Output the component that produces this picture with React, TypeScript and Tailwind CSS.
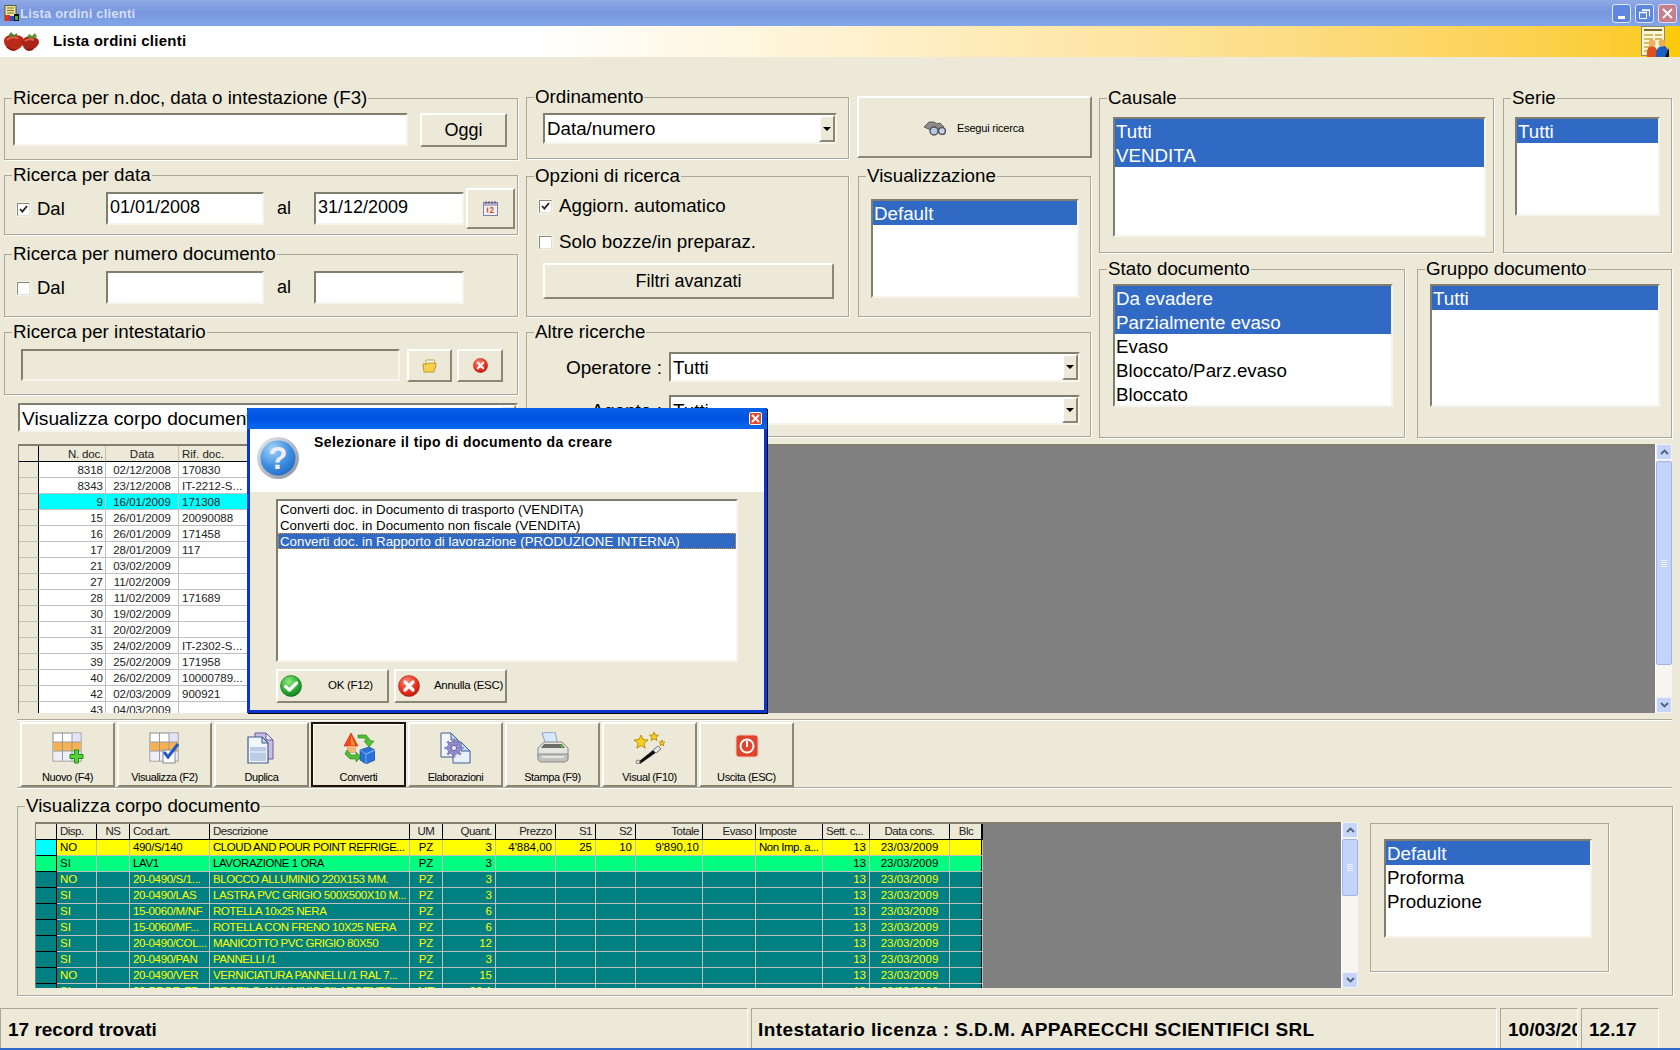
import type { ReactNode } from 'react';

const sunken = 'border-2 border-t-[#817e6e] border-l-[#817e6e] border-r-[#f6f4ec] border-b-[#f6f4ec]';
const raised = 'border-2 border-t-white border-l-white border-r-[#8a8775] border-b-[#8a8775]';

function Group({ label, className, children }: { label?: string; className: string; children?: ReactNode }) {
  return (
    <div className={`border border-[#aca899] shadow-[1px_1px_0_#fff] ${className}`}>
      {label && (
        <div className="-mt-[12px] ml-[7px] w-fit h-[23px] bg-[#ece9d8] px-[1px] leading-[22px] text-[18.75px] whitespace-nowrap">
          {label}
        </div>
      )}
      {children}
    </div>
  );
}

function ListBox({ items, selected, className }: { items: string[]; selected: number; className: string }) {
  return (
    <div className={`bg-white overflow-hidden ${sunken} ${className}`}>
      {items.map((item, i) => (
        <div
          key={item}
          className={`h-[24px] leading-[25px] px-[1px] text-[18.75px] whitespace-nowrap ${i < selected ? 'bg-[#316ac5] text-white' : 'text-black'}`}
        >
          {item}
        </div>
      ))}
    </div>
  );
}

function Arrow({ className }: { className?: string }) {
  return (
    <svg width="8" height="4" viewBox="0 0 8 4" className={className}>
      <path d="M0 0h8L4 4z" fill="#000" />
    </svg>
  );
}

function Combo({ value, className, text = 'text-[18.75px]' }: { value: string; className: string; text?: string }) {
  return (
    <div className={`flex bg-white ${sunken} ${className}`}>
      <div className={`flex-1 pl-[2px] leading-[28px] whitespace-nowrap overflow-hidden ${text}`}>{value}</div>
      <div className={`w-[16px] flex items-center justify-center bg-[#ece9d8] ${raised}`}>
        <Arrow />
      </div>
    </div>
  );
}

function Check({ on }: { on?: boolean }) {
  return (
    <div className="w-[13px] h-[13px] shrink-0 flex items-center justify-center bg-white border border-t-[#8a8775] border-l-[#8a8775] border-r-[#e4e2d6] border-b-[#e4e2d6] shadow-[0_0_0_1px_#f4f2e8]">
      {on && (
        <svg width="9" height="9" viewBox="0 0 9 9">
          <path d="M1 4l2.400 2.600L8 1" fill="none" stroke="#222" strokeWidth="1.800" />
        </svg>
      )}
    </div>
  );
}

function Input({ value, className }: { value?: string; className: string }) {
  return (
    <div className={`bg-white pl-[2px] text-[18px] leading-[26px] whitespace-nowrap overflow-hidden ${sunken} ${className}`}>
      {value}
    </div>
  );
}

function Scrollbar({ thumb }: { thumb: string }) {
  return (
    <div className="w-[17px] shrink-0 flex flex-col bg-[#f6f5f0] border-l border-white">
      <div className="h-[16px] shrink-0 flex items-center justify-center bg-[#c6d5f8] border border-[#eef2fd] rounded-[2px]">
        <svg width="9" height="6" viewBox="0 0 9 6"><path d="M1 5l3.500-3.500L8 5" fill="none" stroke="#4d6185" strokeWidth="1.800" /></svg>
      </div>
      <div className={`mt-[1px] shrink-0 flex flex-col items-center justify-center gap-[1px] bg-[#c3d3fb] border border-[#9fb4ea] rounded-[2px] ${thumb}`}>
        <div className="w-[6px] h-[1px] bg-[#eef2fd]" />
        <div className="w-[6px] h-[1px] bg-[#eef2fd]" />
        <div className="w-[6px] h-[1px] bg-[#eef2fd]" />
        <div className="w-[6px] h-[1px] bg-[#eef2fd]" />
      </div>
      <div className="flex-1" />
      <div className="h-[16px] shrink-0 flex items-center justify-center bg-[#c6d5f8] border border-[#eef2fd] rounded-[2px]">
        <svg width="9" height="6" viewBox="0 0 9 6"><path d="M1 1l3.500 3.500L8 1" fill="none" stroke="#4d6185" strokeWidth="1.800" /></svg>
      </div>
    </div>
  );
}

/* ---------- icons ---------- */

function TitleIcon() {
  return (
    <svg width="15" height="17" viewBox="0 0 15 17">
      <rect x="1" y="0.500" width="11" height="15" fill="#f8e89a" stroke="#5a5a30" />
      <path d="M3 3h7M3 5.500h7M3 8h7" stroke="#6a6a30" />
      <rect x="1" y="10" width="5" height="6" fill="#e03020" />
      <rect x="6" y="11" width="4" height="5" fill="#2a50c8" />
      <rect x="10" y="9" width="5" height="7" fill="#101010" />
      <rect x="11" y="11" width="3" height="4" fill="#40b040" />
    </svg>
  );
}

function Strawberries() {
  return (
    <svg width="37" height="20" viewBox="0 0 37 20">
      <path d="M1 9c0-5 6-7 11-6 5 0 9 2 9 6 0 5-6 9-10 10C6 19 1 14 1 9z" fill="#b92a1b" />
      <path d="M19 10c0-4 5-6 9-5 5 0 8 2 8 5 0 4-6 8-10 9-3 0-7-4-7-9z" fill="#a92517" />
      <path d="M4 8c3-3 8-3 11-2M22 9c3-2 6-2 9-1" stroke="#e2604c" strokeWidth="2" fill="none" />
      <path d="M4 15c3 2 6 3 8 3M24 17c2 1 4 1 6 0" stroke="#7c1a10" strokeWidth="1.500" fill="none" />
      <path d="M8 0l3 3 3-2 0 3-5 1-4-1z" fill="#55802f" />
      <path d="M26 2l3 2 3-3 2 4-5 2-5-2z" fill="#5f8f34" />
    </svg>
  );
}

function HeaderDocIcon() {
  return (
    <svg width="29" height="31" viewBox="0 0 29 31">
      <rect x="0.500" y="0.500" width="23" height="29" fill="#fbf6d8" stroke="#8d8a60" />
      <path d="M3 4h18" stroke="#7d6a2a" strokeWidth="2" />
      <path d="M3 9h9M14 9h7M3 13h9M14 13h7M3 17h7M3 21h6M3 25h5" stroke="#c8a83c" strokeWidth="1.500" />
      <path d="M6 31c-1-8 2-11 5-11s6 3 6 11z" fill="#e0501c" />
      <circle cx="11" cy="17" r="3.600" fill="#f0b060" />
      <path d="M15 31c-1-8 3-11 7-11s6 4 6 11z" fill="#1a60c0" />
      <circle cx="21" cy="17" r="3.600" fill="#e8b050" />
      <path d="M28 22v9h-4z" fill="#101010" />
    </svg>
  );
}

function Binoculars() {
  return (
    <svg width="23" height="15" viewBox="0 0 23 15">
      <path d="M1 6l5-5h5l3 2 3-1 4 4-4 3H8z" fill="#8c8c8c" stroke="#5c5c5c" />
      <circle cx="11" cy="10" r="4" fill="#b8c8e8" stroke="#505050" strokeWidth="1.400" />
      <circle cx="19" cy="10" r="3.400" fill="#c4d4f0" stroke="#505050" strokeWidth="1.400" />
    </svg>
  );
}

function CalendarIcon() {
  return (
    <svg width="15" height="15" viewBox="0 0 15 15">
      <rect x="0.500" y="1.500" width="14" height="13" fill="#f0f0fa" stroke="#8080a8" />
      <rect x="1" y="2" width="13" height="3" fill="#b8b0c8" />
      <path d="M3 0v3M6 0v3M9 0v3M12 0v3" stroke="#605878" />
      <path d="M4.500 6.500v5" stroke="#e85020" strokeWidth="1.400" />
      <path d="M7 7.500c1-1.600 3.600-1 3 .8L7.400 11.500H11" fill="none" stroke="#e85020" strokeWidth="1.200" />
    </svg>
  );
}

function FolderIcon() {
  return (
    <svg width="16" height="14" viewBox="0 0 16 14">
      <path d="M4 1h8l1 2v3H4z" fill="#fff" stroke="#b8a040" />
      <path d="M1 5h4l1-1h7l1 2-2 7H2z" fill="#f8d050" stroke="#c09820" />
    </svg>
  );
}

function StopIcon({ size, id }: { size: number; id: string }) {
  return (
    <svg width={size} height={size} viewBox="0 0 22 22">
      <defs>
        <radialGradient id={id} cx="0.400" cy="0.300" r="0.800">
          <stop offset="0" stopColor="#ff8a78" />
          <stop offset="0.600" stopColor="#e8301c" />
          <stop offset="1" stopColor="#b01408" />
        </radialGradient>
      </defs>
      <circle cx="11" cy="11" r="10.500" fill={`url(#${id})`} stroke="#a81c10" strokeWidth="0.600" />
      <path d="M7 7l8 8M15 7l-8 8" stroke="#fff" strokeWidth="3.200" strokeLinecap="round" />
    </svg>
  );
}

function OkIcon() {
  return (
    <svg width="22" height="22" viewBox="0 0 22 22">
      <defs>
        <radialGradient id="okFill" cx="0.400" cy="0.300" r="0.800">
          <stop offset="0" stopColor="#90ec80" />
          <stop offset="0.600" stopColor="#28a830" />
          <stop offset="1" stopColor="#0c7018" />
        </radialGradient>
      </defs>
      <circle cx="11" cy="11" r="10.500" fill="url(#okFill)" stroke="#0c6a18" strokeWidth="0.600" />
      <path d="M5.500 11.500l4 3.500 7-7" fill="none" stroke="#fff" strokeWidth="3.200" strokeLinecap="round" strokeLinejoin="round" />
    </svg>
  );
}

function QuestionIcon() {
  return (
    <svg width="44" height="44" viewBox="0 0 44 44">
      <defs>
        <radialGradient id="qFill" cx="0.350" cy="0.250" r="0.900">
          <stop offset="0" stopColor="#a8d4f8" />
          <stop offset="0.550" stopColor="#3c8ee0" />
          <stop offset="1" stopColor="#1a62bc" />
        </radialGradient>
        <linearGradient id="qRing" x1="0" y1="0" x2="1" y2="1">
          <stop offset="0" stopColor="#e8eaf0" />
          <stop offset="1" stopColor="#8a8e9c" />
        </linearGradient>
      </defs>
      <circle cx="22" cy="22" r="21" fill="url(#qRing)" />
      <circle cx="22" cy="22" r="17.500" fill="url(#qFill)" />
      <text x="22" y="33" textAnchor="middle" fontFamily="Liberation Sans" fontWeight="700" fontSize="31" fill="#f0eef8">?</text>
    </svg>
  );
}

function GridBase() {
  return (
    <>
      <rect x="1" y="1" width="28" height="28" fill="#fff" stroke="#8a8a8a" />
      <rect x="1.500" y="10" width="27" height="9" fill="#f8b050" />
      <rect x="20" y="1.500" width="8.500" height="8.500" fill="#e4e4f8" />
      <rect x="1.500" y="19" width="27" height="9.500" fill="#eeeefa" />
      <path d="M10.500 1v28M20 1v28M1 10h28M1 19h28" stroke="#9a9a9a" />
    </>
  );
}

function NewIcon() {
  return (
    <svg width="32" height="32" viewBox="0 0 32 32">
      <GridBase />
      <path d="M22.500 18h4v4.500H31v4h-4.500V31h-4v-4.500H18v-4h4.500z" fill="#58d038" stroke="#189018" />
    </svg>
  );
}

function ViewIcon() {
  return (
    <svg width="32" height="32" viewBox="0 0 32 32">
      <GridBase />
      <rect x="14" y="18" width="12" height="13" fill="#fff" stroke="#8a8a8a" />
      <path d="M15 20l4 5 10-13" fill="none" stroke="#1f58c8" strokeWidth="3" />
    </svg>
  );
}

function DuplicateIcon() {
  return (
    <svg width="32" height="32" viewBox="0 0 32 32">
      <path d="M9 1h11l7 7v19H9z" fill="#c8c0e4" stroke="#6a5a9c" />
      <path d="M20 1v7h7z" fill="#eceaf8" stroke="#6a5a9c" />
      <path d="M2 5h14l6 6v20H2z" fill="#f2f6fc" stroke="#3c5c94" strokeWidth="1.200" />
      <path d="M16 5v6h6z" fill="#c8d8f0" stroke="#3c5c94" />
      <rect x="4" y="15" width="16" height="14" fill="#bccce4" />
      <path d="M4 20h16" stroke="#f2f6fc" />
    </svg>
  );
}

function ConvertIcon() {
  return (
    <svg width="32" height="32" viewBox="0 0 32 32">
      <path d="M8 1l7 13h-3v6H5v-6H1z" fill="#f04820" stroke="#c02810" strokeWidth="0.600" />
      <path d="M8 4l4 9H8z" fill="#f8a030" />
      <path d="M5 14h7v6H5z" fill="#f8b870" />
      <path d="M15 3h8l5 6h3l-5 6-5-6h3l-3-3h-6z" fill="#50c038" stroke="#208018" strokeWidth="0.600" />
      <path d="M4 18l4 5h5v-3l5 5-5 5v-3H7l-5-5z" fill="#50c038" stroke="#208018" strokeWidth="0.600" />
      <path d="M17 18l9-3 6 3v10l-9 4-6-4z" fill="#2a72d8" stroke="#103c8c" strokeWidth="0.600" />
      <path d="M17 18l6 4 9-4v0l-9 4v10" fill="none" stroke="#8cb8f0" strokeWidth="0.800" />
    </svg>
  );
}

function ProcessIcon() {
  return (
    <svg width="32" height="32" viewBox="0 0 32 32">
      <path d="M1 1h10l7 7v17H1z" fill="#f2f6fc" stroke="#3c5c94" />
      <path d="M11 1v7h7z" fill="#c8d8f0" stroke="#3c5c94" />
      <path d="M13 10h8l9 9v12H13z" fill="#e8f0fa" stroke="#3c5c94" />
      <path d="M21 10v9h9z" fill="#c8d8f0" stroke="#3c5c94" />
      <circle cx="14" cy="16" r="6.500" fill="#a8a4d8" stroke="#6c68a8" />
      <path d="M14 6.500v19M4.500 16h19M7.300 9.300l13.400 13.400M20.700 9.300L7.300 22.700" stroke="#8884c4" strokeWidth="2.600" />
      <circle cx="14" cy="16" r="2.600" fill="#e8e8f8" stroke="#6c68a8" />
    </svg>
  );
}

function PrintIcon() {
  return (
    <svg width="32" height="32" viewBox="0 0 32 32">
      <path d="M5 1l13-1 3 13H9z" fill="#d8e8fc" stroke="#8aa0c8" />
      <path d="M1 16l6-6h18l6 6v9H1z" fill="#e4e4e0" stroke="#8c8c88" />
      <path d="M7 12h18l3 4H4z" fill="#6c6c68" />
      <circle cx="25" cy="14" r="1.500" fill="#50c040" />
      <path d="M1 22h30v6l-3 2H4l-3-2z" fill="#c0c0bc" stroke="#8c8c88" />
      <path d="M5 25h22" stroke="#f0f0ec" strokeWidth="1.500" />
    </svg>
  );
}

function WandIcon() {
  return (
    <svg width="32" height="32" viewBox="0 0 32 32">
      <path d="M7 3l2 4.500 5 .5-4 3.200 1.200 5L7 13.500l-4.200 2.700L4 11.200 0 8l5-.5z" fill="#f8d020" stroke="#c09010" />
      <path d="M20 0l1.300 3 3.200.3-2.400 2 .8 3.200-2.900-1.700-2.900 1.700.8-3.200-2.400-2 3.200-.3z" fill="#f8d020" stroke="#c09010" />
      <path d="M28 8l.9 2 2.100.2-1.600 1.400.5 2.100-1.900-1.100-1.900 1.100.5-2.100L25 10.200l2.100-.2z" fill="#f8d020" stroke="#c09010" />
      <path d="M3 31l21-17 3 3L6 32z" fill="#101010" />
      <path d="M19 18l5-4 3 3-5 4z" fill="#e8e8e8" stroke="#808080" />
      <circle cx="4" cy="30" r="2" fill="#d8d8d8" stroke="#808080" />
    </svg>
  );
}

function ExitIcon() {
  return (
    <svg width="32" height="32" viewBox="0 0 32 32">
      <rect x="5" y="3" width="22" height="22" rx="3" fill="#e0452c" stroke="#f4c4b4" />
      <circle cx="16" cy="14" r="6.500" fill="none" stroke="#fff" strokeWidth="2" />
      <path d="M16 9v6" stroke="#fff" strokeWidth="2" />
    </svg>
  );
}

/* ---------- data ---------- */

const topRows = [
  ['8318', '02/12/2008', '170830'],
  ['8343', '23/12/2008', 'IT-2212-S...'],
  ['9', '16/01/2009', '171308'],
  ['15', '26/01/2009', '20090088'],
  ['16', '26/01/2009', '171458'],
  ['17', '28/01/2009', '117'],
  ['21', '03/02/2009', ''],
  ['27', '11/02/2009', ''],
  ['28', '11/02/2009', '171689'],
  ['30', '19/02/2009', ''],
  ['31', '20/02/2009', ''],
  ['35', '24/02/2009', 'IT-2302-S...'],
  ['39', '25/02/2009', '171958'],
  ['40', '26/02/2009', '10000789...'],
  ['42', '02/03/2009', '900921'],
  ['43', '04/03/2009', ''],
];

const bodyColumns = [
  { title: 'Disp.', w: 'w-[40px]', align: 'text-left', head: 'text-left' },
  { title: 'NS', w: 'w-[33px]', align: 'text-left', head: 'text-center' },
  { title: 'Cod.art.', w: 'w-[80px]', align: 'text-left tracking-[-0.35px]', head: 'text-left' },
  { title: 'Descrizione', w: 'w-[200px]', align: 'text-left tracking-[-0.45px]', head: 'text-left' },
  { title: 'UM', w: 'w-[33px]', align: 'text-center', head: 'text-center' },
  { title: 'Quant.', w: 'w-[53px]', align: 'text-right', head: 'text-right' },
  { title: 'Prezzo', w: 'w-[60px]', align: 'text-right', head: 'text-right' },
  { title: 'S1', w: 'w-[40px]', align: 'text-right', head: 'text-right' },
  { title: 'S2', w: 'w-[40px]', align: 'text-right', head: 'text-right' },
  { title: 'Totale', w: 'w-[67px]', align: 'text-right', head: 'text-right' },
  { title: 'Evaso', w: 'w-[53px]', align: 'text-right', head: 'text-right' },
  { title: 'Imposte', w: 'w-[67px]', align: 'text-left tracking-[-0.5px]', head: 'text-left' },
  { title: 'Sett. c...', w: 'w-[47px]', align: 'text-right', head: 'text-left' },
  { title: 'Data cons.', w: 'w-[80px]', align: 'text-center', head: 'text-center' },
  { title: 'Blc', w: 'w-[33px]', align: 'text-center', head: 'text-center' },
];

const body = (disp: string, cod: string, desc: string, um: string, q: string) =>
  [disp, '', cod, desc, um, q, '', '', '', '', '', '', '13', '23/03/2009', ''];

const bodyRows = [
  { cls: 'bg-[#ffff00] text-black', mark: 'bg-[#00ffff]', cells: ['NO', '', '490/S/140', 'CLOUD AND POUR POINT REFRIGE...', 'PZ', '3', "4'884,00", '25', '10', "9'890,10", '', 'Non Imp. a...', '13', '23/03/2009', ''] },
  { cls: 'bg-[#00ff80] text-black', mark: 'bg-[#00ff80]', cells: body('SI', 'LAV1', 'LAVORAZIONE 1 ORA', 'PZ', '3') },
  { cls: 'bg-[#008080] text-[#ffff00]', mark: 'bg-[#008080]', cells: body('NO', '20-0490/S/1...', 'BLOCCO ALLUMINIO 220X153 MM.', 'PZ', '3') },
  { cls: 'bg-[#008080] text-[#ffff00]', mark: 'bg-[#008080]', cells: body('SI', '20-0490/LAS', 'LASTRA PVC GRIGIO 500X500X10 M...', 'PZ', '3') },
  { cls: 'bg-[#008080] text-[#ffff00]', mark: 'bg-[#008080]', cells: body('SI', '15-0060/M/NF', 'ROTELLA 10x25 NERA', 'PZ', '6') },
  { cls: 'bg-[#008080] text-[#ffff00]', mark: 'bg-[#008080]', cells: body('SI', '15-0060/MF...', 'ROTELLA CON FRENO 10X25 NERA', 'PZ', '6') },
  { cls: 'bg-[#008080] text-[#ffff00]', mark: 'bg-[#008080]', cells: body('SI', '20-0490/COL...', 'MANICOTTO PVC GRIGIO 80X50', 'PZ', '12') },
  { cls: 'bg-[#008080] text-[#ffff00]', mark: 'bg-[#008080]', cells: body('SI', '20-0490/PAN', 'PANNELLI /1', 'PZ', '3') },
  { cls: 'bg-[#008080] text-[#ffff00]', mark: 'bg-[#008080]', cells: body('NO', '20-0490/VER', 'VERNICIATURA PANNELLI /1 RAL 7...', 'PZ', '15') },
  { cls: 'bg-[#008080] text-[#ffff00]', mark: 'bg-[#008080]', cells: body('SI', '20-PROF.-FR', 'PROFILO ALLUMINIO SILARGENTO', 'MT', '20,1') },
];

const tools = [
  { label: 'Nuovo (F4)', icon: NewIcon },
  { label: 'Visualizza (F2)', icon: ViewIcon },
  { label: 'Duplica', icon: DuplicateIcon },
  { label: 'Converti', icon: ConvertIcon, active: true },
  { label: 'Elaborazioni', icon: ProcessIcon },
  { label: 'Stampa (F9)', icon: PrintIcon },
  { label: 'Visual (F10)', icon: WandIcon },
  { label: 'Uscita (ESC)', icon: ExitIcon },
];

/* ---------- sections ---------- */

function TitleBar() {
  return (
    <div className="h-[26px] shrink-0 flex items-center pl-[4px] pr-[3px] bg-linear-to-b from-[#90a9e6] via-[#7896de] to-[#82a6e8]">
      <TitleIcon />
      <span className="ml-[1px] pt-[1px] text-[13px] font-bold text-[#d4dff6] tracking-[0.2px]">Lista ordini clienti</span>
      <div className="ml-auto flex gap-[4px]">
        <div className="w-[19px] h-[19px] flex items-end pb-[3px] pl-[5px] rounded-[3px] border border-[#dfe8fb] bg-[#5f87e0]">
          <div className="w-[7px] h-[3px] bg-white" />
        </div>
        <div className="w-[19px] h-[19px] flex items-center justify-center rounded-[3px] border border-[#dfe8fb] bg-[#5f87e0]">
          <svg width="11" height="11" viewBox="0 0 11 11">
            <path d="M3.500 2.500h7v6M.5 4.500h7v6h-7z" fill="none" stroke="#fff" />
            <path d="M3 2h8M0 4.500h8" stroke="#fff" strokeWidth="1.400" />
          </svg>
        </div>
        <div className="w-[19px] h-[19px] flex items-center justify-center rounded-[3px] border border-[#eadfe6] bg-[#c57f8d]">
          <svg width="11" height="11" viewBox="0 0 11 11">
            <path d="M1 1l9 9M10 1l-9 9" stroke="#fff" strokeWidth="1.800" />
          </svg>
        </div>
      </div>
    </div>
  );
}

function Header() {
  return (
    <div className="h-[31px] shrink-0 flex items-center pl-[3px] pr-[10px] bg-linear-to-r from-white from-[32%] to-[#fbc905]">
      <Strawberries />
      <span className="ml-[13px] text-[15px] font-bold tracking-[0.25px] text-black">Lista ordini clienti</span>
      <div className="ml-auto">
        <HeaderDocIcon />
      </div>
    </div>
  );
}

function SearchColumn() {
  return (
    <div className="w-[514px] shrink-0 flex flex-col">
      <Group label="Ricerca per n.doc, data o intestazione (F3)" className="h-[62px]">
        <div className="flex mt-[3px] ml-[8px]">
          <Input className="w-[395px] h-[33px]" />
          <div className={`ml-[12px] w-[87px] h-[34px] flex items-center justify-center text-[18px] ${raised}`}>Oggi</div>
        </div>
      </Group>

      <Group label="Ricerca per data" className="h-[60px] mt-[15px]">
        <div className="flex items-center h-[40px] mt-[1px] ml-[12px]">
          <div className="w-[89px] pt-[2px] flex items-center gap-[7px] text-[18.5px]">
            <Check on />
            Dal
          </div>
          <Input value="01/01/2008" className="w-[158px] h-[33px]" />
          <div className="w-[50px] pl-[13px] text-[18px]">al</div>
          <Input value="31/12/2009" className="w-[150px] h-[33px]" />
          <div className={`ml-[2px] w-[49px] h-[41px] flex items-center justify-center ${raised}`}>
            <CalendarIcon />
          </div>
        </div>
      </Group>

      <Group label="Ricerca per numero documento" className="h-[63px] mt-[19px]">
        <div className="flex items-center h-[40px] mt-[1px] ml-[12px]">
          <div className="w-[89px] pt-[2px] flex items-center gap-[7px] text-[18.5px]">
            <Check />
            Dal
          </div>
          <Input className="w-[158px] h-[33px]" />
          <div className="w-[50px] pl-[13px] text-[18px]">al</div>
          <Input className="w-[150px] h-[33px]" />
        </div>
      </Group>

      <Group label="Ricerca per intestatario" className="h-[63px] mt-[15px]">
        <div className="flex mt-[5px] ml-[16px]">
          <div className={`w-[379px] h-[32px] bg-[#ece9d8] ${sunken}`} />
          <div className={`ml-[7px] w-[45px] h-[33px] flex items-center justify-center ${raised}`}>
            <FolderIcon />
          </div>
          <div className={`ml-[5px] w-[46px] h-[33px] flex items-center justify-center ${raised}`}>
            <StopIcon size={15} id="stopSmall" />
          </div>
        </div>
      </Group>

      <Combo value="Visualizza corpo documento" text="text-[19.25px]" className="mt-[8px] ml-[14px] w-[500px] h-[29px]" />
    </div>
  );
}

function OptionsColumn() {
  return (
    <div className="ml-[8px] w-[566px] shrink-0 flex flex-col -mt-[1px]">
      <div className="flex items-start">
        <Group label="Ordinamento" className="w-[323px] h-[62px]">
          <Combo value="Data/numero" className="mt-[4px] ml-[16px] w-[294px] h-[31px]" />
        </Group>
        <div className={`ml-[8px] -mt-[1px] w-[235px] h-[62px] flex items-center pl-[64px] pt-[2px] gap-[11px] text-[11px] tracking-[-0.2px] ${raised}`}>
          <Binoculars />
          Esegui ricerca
        </div>
      </div>

      <div className="flex mt-[17px]">
        <Group label="Opzioni di ricerca" className="w-[323px] h-[141px]">
          <div className="flex items-center h-[20px] mt-[8px] ml-[12px] gap-[7px] text-[18.75px]">
            <Check on />
            Aggiorn. automatico
          </div>
          <div className="flex items-center h-[20px] mt-[16px] ml-[12px] gap-[7px] text-[18.75px]">
            <Check />
            Solo bozze/in preparaz.
          </div>
          <div className={`mt-[11px] ml-[16px] w-[291px] h-[36px] flex items-center justify-center text-[18px] ${raised}`}>
            Filtri avanzati
          </div>
        </Group>
        <Group label="Visualizzazione" className="ml-[9px] w-[233px] h-[141px]">
          <ListBox items={['Default']} selected={1} className="mt-[11px] ml-[12px] w-[208px] h-[99px]" />
        </Group>
      </div>

      <Group label="Altre ricerche" className="mt-[15px] w-[565px] h-[105px]">
        <div className="flex items-center h-[30px] mt-[8px]">
          <div className="w-[135px] pt-[2px] text-right text-[19px]">Operatore :</div>
          <Combo value="Tutti" className="ml-[7px] w-[411px] h-[30px]" />
        </div>
        <div className="flex items-center h-[30px] mt-[13px]">
          <div className="w-[135px] pt-[2px] text-right text-[19px]">Agente :</div>
          <Combo value="Tutti" className="ml-[7px] w-[411px] h-[30px]" />
        </div>
      </Group>
    </div>
  );
}

function FilterColumn() {
  return (
    <div className="ml-[7px] w-[573px] shrink-0 flex flex-col">
      <div className="flex">
        <Group label="Causale" className="w-[395px] h-[155px]">
          <ListBox items={['Tutti', 'VENDITA']} selected={2} className="mt-[7px] ml-[13px] w-[373px] h-[120px]" />
        </Group>
        <Group label="Serie" className="ml-[9px] w-[169px] h-[155px]">
          <ListBox items={['Tutti']} selected={1} className="mt-[7px] ml-[11px] w-[145px] h-[99px]" />
        </Group>
      </div>
      <div className="flex mt-[16px]">
        <Group label="Stato documento" className="w-[306px] h-[169px]">
          <ListBox
            items={['Da evadere', 'Parzialmente evaso', 'Evaso', 'Bloccato/Parz.evaso', 'Bloccato']}
            selected={2}
            className="mt-[3px] ml-[13px] w-[280px] h-[123px]"
          />
        </Group>
        <Group label="Gruppo documento" className="ml-[12px] w-[255px] h-[169px]">
          <ListBox items={['Tutti']} selected={1} className="mt-[3px] ml-[12px] w-[230px] h-[123px]" />
        </Group>
      </div>
    </div>
  );
}

function OrdersGrid() {
  return (
    <div className="ml-[18px] w-[1654px] h-[269px] shrink-0 flex">
      <div className="flex-1 bg-[#808080] overflow-hidden border-t-2 border-l border-[#817e6e]">
        <div className="flex h-[16px] w-[500px] bg-[#ece9d8] text-[11.5px] leading-[16px] text-[#222]">
          <div className="w-[20px] border-r border-b border-black" />
          <div className="w-[67px] text-right pr-[2px] tracking-[-0.2px] border-r border-b border-r-[#c4c1b0] border-b-black">N. doc.</div>
          <div className="w-[73px] text-center border-r border-b border-r-[#c4c1b0] border-b-black">Data</div>
          <div className="flex-1 pl-[3px] border-b border-black">Rif. doc.</div>
        </div>
        {topRows.map((row, i) => (
          <div key={row[0]} className="flex h-[16px] w-[500px] text-[11.5px] leading-[16px] text-[#222]">
            <div className="w-[20px] bg-[#ece9d8] border-r border-b border-r-black border-b-[#c0c0c0]" />
            <div className={`flex-1 flex ${i === 2 ? 'bg-[#00ffff]' : 'bg-white'}`}>
              <div className="w-[67px] text-right pr-[2px] border-r border-b border-[#c0c0c0]">{row[0]}</div>
              <div className="w-[73px] text-center border-r border-b border-[#c0c0c0]">{row[1]}</div>
              <div className="flex-1 pl-[3px] border-b border-[#c0c0c0]">{row[2]}</div>
            </div>
          </div>
        ))}
      </div>
      <Scrollbar thumb="h-[204px]" />
    </div>
  );
}

function Toolbar() {
  return (
    <div className="mt-[6px] ml-[17px] w-[1655px] h-[69px] shrink-0 flex gap-[2px] pt-[2px] pl-[3px] border-y border-y-[#aca899] shadow-[0_1px_0_#fff,inset_0_1px_0_#fff]">
      {tools.map((tool) => {
        const Icon = tool.icon;
        return (
          <div
            key={tool.label}
            className={`w-[95px] h-[65px] flex flex-col items-center pt-[8px] text-[11px] leading-[14px] tracking-[-0.4px] ${
              tool.active ? 'border-2 border-[#1c140c] shadow-[inset_1px_1px_0_#fff]' : raised
            }`}
          >
            <Icon />
            <span className="mt-[6px] whitespace-nowrap">{tool.label}</span>
          </div>
        );
      })}
    </div>
  );
}

function BodySection() {
  return (
    <Group label="Visualizza corpo documento" className="mt-[18px] ml-[17px] w-[1656px] h-[190px] shrink-0">
      <div className="flex mt-[4px] ml-[17px]">
        <div className="w-[1306px] h-[166px] bg-[#808080] overflow-hidden border-t-2 border-l border-[#817e6e]">
          <div className="flex h-[16px] w-[947px] bg-[#ece9d8] text-[11.5px] leading-[15px] tracking-[-0.5px] text-[#222] border-r-2 border-black">
            <div className="w-[21px] shrink-0 border-r border-b border-black" />
            {bodyColumns.map((col) => (
              <div key={col.title} className={`${col.w} ${col.head} shrink-0 px-[3px] border-r border-b border-black whitespace-nowrap overflow-hidden`}>
                {col.title}
              </div>
            ))}
          </div>
          {bodyRows.map((row) => (
            <div key={row.cells[2]} className={`flex h-[16px] w-[947px] text-[11.5px] leading-[15px] border-r-2 border-black ${row.cls}`}>
              <div className={`w-[21px] shrink-0 border-r border-b border-black ${row.mark}`} />
              {bodyColumns.map((col, c) => (
                <div key={col.title} className={`${col.w} ${col.align} shrink-0 px-[3px] border-r border-b border-[#c0c0c0] whitespace-nowrap overflow-hidden`}>
                  {row.cells[c]}
                </div>
              ))}
            </div>
          ))}
        </div>
        <Scrollbar thumb="h-[57px]" />
        <Group className="ml-[12px] mt-[1px] w-[239px] h-[149px]">
          <ListBox items={['Default', 'Proforma', 'Produzione']} selected={1} className="mt-[15px] ml-[13px] w-[208px] h-[99px]" />
        </Group>
      </div>
    </Group>
  );
}

function StatusBar() {
  const panel = 'h-full pt-[9px] text-[19px] leading-[24px] font-bold whitespace-nowrap overflow-hidden border-t border-l border-t-[#aca899] border-l-[#aca899] border-r border-r-[#fff]';
  return (
    <div className="mt-[12px] h-[40px] shrink-0 flex">
      <div className={`${panel} w-[748px] pl-[7px]`}>17 record trovati</div>
      <div className={`${panel} ml-[3px] w-[746px] pl-[6px] tracking-[0.4px]`}>Intestatario licenza : S.D.M. APPARECCHI SCIENTIFICI SRL</div>
      <div className={`${panel} ml-[3px] w-[78px] pl-[7px]`}>10/03/2009</div>
      <div className={`${panel} ml-[3px] w-[78px] pl-[7px]`}>12.17</div>
    </div>
  );
}

function ConvertDialog() {
  return (
    <div className="absolute left-[247px] top-[408px] w-[520px] h-[305px] flex flex-col bg-[#ece9d8] border-x-[3px] border-b-[3px] border-[#0a35d0] shadow-[1px_1px_0_#000]">
      <div className="h-[21px] -mx-[3px] shrink-0 flex items-center justify-end pr-[5px] rounded-t-[3px] bg-linear-to-b from-[#0a5fe6] via-[#0054e3] to-[#0a68ee]">
        <div className="w-[13px] h-[13px] flex items-center justify-center rounded-[2px] border border-white bg-[#e0492c]">
          <svg width="9" height="9" viewBox="0 0 9 9">
            <path d="M1 1l7 7M8 1l-7 7" stroke="#fff" strokeWidth="1.800" />
          </svg>
        </div>
      </div>
      <div className="h-[63px] shrink-0 flex items-start bg-white">
        <div className="ml-[6px] mt-[7px]">
          <QuestionIcon />
        </div>
        <div className="ml-[14px] mt-[3px] text-[14px] leading-[20px] font-bold tracking-[0.42px] text-black">
          Selezionare il tipo di documento da creare
        </div>
      </div>
      <div className={`mt-[7px] ml-[26px] w-[462px] h-[163px] shrink-0 bg-white text-[13.3px] leading-[17px] whitespace-nowrap ${sunken}`}>
        <div className="h-[16px] pl-[2px]">Converti doc. in Documento di trasporto (VENDITA)</div>
        <div className="h-[16px] pl-[2px]">Converti doc. in Documento non fiscale (VENDITA)</div>
        <div className="h-[16px] pl-[2px] bg-[#316ac5] text-white outline-1 -outline-offset-1 outline-dotted outline-[#d89030]">
          Converti doc. in Rapporto di lavorazione (PRODUZIONE INTERNA)
        </div>
      </div>
      <div className="mt-[7px] ml-[26px] flex gap-[5px] text-[11.5px] tracking-[-0.3px]">
        <div className={`w-[113px] h-[34px] flex items-center pl-[2px] ${raised}`}>
          <OkIcon />
          <span className="ml-[26px]">OK (F12)</span>
        </div>
        <div className={`w-[113px] h-[34px] flex items-center pl-[2px] ${raised}`}>
          <StopIcon size={22} id="stopLarge" />
          <span className="ml-[14px] whitespace-nowrap">Annulla (ESC)</span>
        </div>
      </div>
    </div>
  );
}

export default function App() {
  return (
    <div className="relative w-[1680px] h-[1050px] flex flex-col overflow-hidden bg-[#ece9d8] text-black font-['Liberation_Sans',Arial,sans-serif]">
      <TitleBar />
      <Header />
      <div className="h-[387px] shrink-0 flex pl-[4px] pt-[41px]">
        <SearchColumn />
        <OptionsColumn />
        <FilterColumn />
      </div>
      <OrdersGrid />
      <Toolbar />
      <BodySection />
      <StatusBar />
      <div className="h-[2px] shrink-0 bg-[#3169c8]" />
      <ConvertDialog />
    </div>
  );
}
